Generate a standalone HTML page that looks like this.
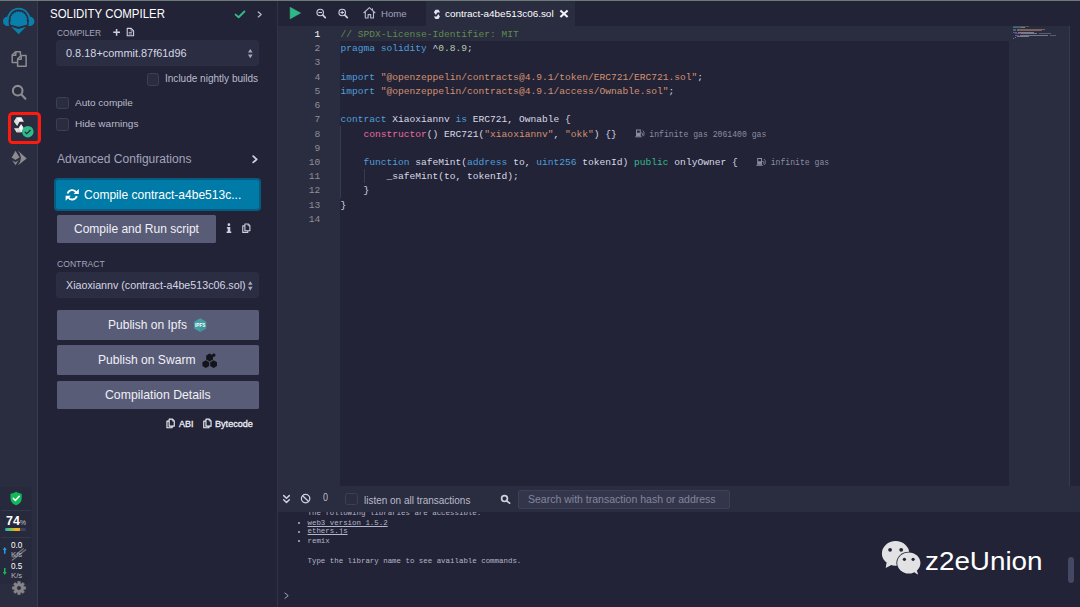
<!DOCTYPE html>
<html lang="en"><head><meta charset="utf-8"><title>Remix - Solidity Compiler</title>
<style>
html,body{margin:0;padding:0;background:#222336;}
#root{position:relative;width:1080px;height:607px;overflow:hidden;background:#222336;font-family:"Liberation Sans", sans-serif;}
#root *{box-sizing:border-box;}
.b{position:absolute;}
.t{position:absolute;white-space:pre;line-height:1;display:inline-block;transform-origin:0 50%;}
.num{position:absolute;left:290px;width:30.3px;text-align:right;font-family:"Liberation Mono", monospace;font-size:9.6px;line-height:14.23px;height:14.23px;}
.cl{position:absolute;left:340.4px;white-space:pre;font-family:"Liberation Mono", monospace;font-size:9.6px;line-height:14.23px;height:14.23px;color:#d8d9e6;}
.gas{position:absolute;white-space:pre;font-family:"Liberation Mono", monospace;font-size:8.15px;line-height:10px;color:#8a8ca2;}
.tm{position:absolute;white-space:pre;font-family:"Liberation Mono", monospace;font-size:7.43px;line-height:10px;height:10px;color:#b4b6c9;}
.btn{position:absolute;background:#595c76;border-radius:1.6px;}
.sel{position:absolute;background:#2b2d42;border:1px solid #2c2e44;border-radius:3px;}
.cb{position:absolute;background:#2a2c3f;border:1px solid #3d4055;border-radius:2.5px;}
svg{position:absolute;overflow:visible;}
</style></head>
<body><div id="root">
<div class="b" style="left:0px;top:0px;width:37.6px;height:607px;background:#2a2c3f;"></div>
<div class="b" style="left:37.3px;top:0px;width:1px;height:607px;background:#373a50;"></div>
<div class="b" style="left:277px;top:0px;width:1px;height:607px;background:#30334a;"></div>
<div class="b" style="left:426px;top:1px;width:149px;height:25px;background:#2a2c3f;"></div>
<div class="b" style="left:278px;top:26px;width:62.3px;height:460px;background:#2a2c3f;"></div>
<div class="b" style="left:340.3px;top:26px;width:670px;height:14.9px;background:#2a2c3f;"></div>
<div class="b" style="left:1009.1px;top:26px;width:60.4px;height:460px;background:#2a2c3f;"></div>
<div class="b" style="left:1069.3px;top:26px;width:1px;height:460px;background:#363a50;"></div>
<div class="b" style="left:278px;top:486px;width:802px;height:26.4px;background:#2a2c3f;"></div>
<div class="b" style="left:518px;top:490px;width:212px;height:18.7px;background:#33364b;border:1px solid #3c3f55;border-radius:2px;"></div>
<div class="b" style="left:1068px;top:557px;width:6.3px;height:26.3px;background:#444861;border-radius:3px;"></div>
<div class="b" style="left:0px;top:487px;width:32px;height:96.6px;background:#272a3c;border-radius:0 6px 6px 0;"></div>
<div class="b" style="left:1px;top:510.3px;width:29.5px;height:0.8px;background:#33374b;"></div>
<div class="b" style="left:1px;top:537.1px;width:29.5px;height:0.8px;background:#33374b;"></div>
<div class="b" style="left:4.8px;top:528px;width:21.2px;height:2.9px;background:#3f4256;border-radius:1.5px;"></div>
<div class="b" style="left:4.8px;top:528px;width:15.4px;height:2.9px;background:linear-gradient(90deg,#1fb6c4,#8bc34a 45%,#f4b223 75%,#f7a51c);border-radius:1.5px 0 0 1.5px;"></div>
<div class="b" style="left:340.4px;top:126.41px;width:0.8px;height:71.15px;background:#383b50;"></div>
<div class="b" style="left:363.5px;top:169.10000000000002px;width:0.8px;height:14.23px;background:#383b50;"></div>
<div class="b" style="left:1013.2px;top:26.32px;width:15.5px;height:1.0px;background:#608b4e;opacity:0.5;"></div>
<div class="b" style="left:1013.2px;top:27.29px;width:7.5px;height:1.0px;background:#4f9edb;opacity:0.5;"></div>
<div class="b" style="left:1021.2px;top:27.29px;width:3.5px;height:1.0px;background:#c8c9d8;opacity:0.5;"></div>
<div class="b" style="left:1013.2px;top:29.23px;width:3.0px;height:1.0px;background:#4f9edb;opacity:0.5;"></div>
<div class="b" style="left:1016.7px;top:29.23px;width:28.0px;height:1.0px;background:#d39273;opacity:0.5;"></div>
<div class="b" style="left:1013.2px;top:30.2px;width:3.0px;height:1.0px;background:#4f9edb;opacity:0.5;"></div>
<div class="b" style="left:1016.7px;top:30.2px;width:25.5px;height:1.0px;background:#d39273;opacity:0.5;"></div>
<div class="b" style="left:1013.2px;top:32.14px;width:4.0px;height:1.0px;background:#4f9edb;opacity:0.5;"></div>
<div class="b" style="left:1017.7px;top:32.14px;width:16.0px;height:1.0px;background:#c8c9d8;opacity:0.5;"></div>
<div class="b" style="left:1015.2px;top:33.11px;width:5.5px;height:1.0px;background:#e8549a;opacity:0.5;"></div>
<div class="b" style="left:1020.7px;top:33.11px;width:16.5px;height:1.0px;background:#c8c9d8;opacity:0.5;"></div>
<div class="b" style="left:1039.2px;top:33.11px;width:12.0px;height:1.0px;background:#8a8ca2;opacity:0.5;"></div>
<div class="b" style="left:1015.2px;top:35.05px;width:4.0px;height:1.0px;background:#4f9edb;opacity:0.5;"></div>
<div class="b" style="left:1019.7px;top:35.05px;width:28.0px;height:1.0px;background:#b7c4dc;opacity:0.5;"></div>
<div class="b" style="left:1049.7px;top:35.05px;width:6.0px;height:1.0px;background:#8a8ca2;opacity:0.5;"></div>
<div class="b" style="left:1017.2px;top:36.02px;width:11.5px;height:1.0px;background:#c8c9d8;opacity:0.5;"></div>
<div class="b" style="left:1015.2px;top:36.99px;width:0.5px;height:1.0px;background:#c8c9d8;opacity:0.5;"></div>
<div class="b" style="left:1013.2px;top:37.96px;width:0.5px;height:1.0px;background:#c8c9d8;opacity:0.5;"></div>
<div class="b" style="left:0px;top:0px;width:1080px;height:1px;background:#6d7b78;"></div>
<div class="sel" style="left:56.4px;top:40px;width:202.4px;height:26.2px"></div>
<div class="sel" style="left:56.4px;top:271.8px;width:202.4px;height:26.6px"></div>
<div class="cb" style="left:147px;top:73.2px;width:12.4px;height:12.4px"></div>
<div class="cb" style="left:56.3px;top:97.1px;width:12.6px;height:12.4px"></div>
<div class="cb" style="left:56.3px;top:118.2px;width:12.6px;height:12.4px"></div>
<div class="cb" style="left:345px;top:493.3px;width:13px;height:11.8px"></div>
<div class="b" style="left:54px;top:178.2px;width:207px;height:32.8px;background:#085b80;border-radius:4px"></div>
<div class="b" style="left:55.8px;top:180px;width:203.4px;height:29.2px;background:#007aa6;border-radius:2.5px"></div>
<div class="btn" style="left:56.7px;top:214.5px;width:158.9px;height:28px"></div>
<div class="btn" style="left:56.7px;top:310.3px;width:202px;height:29.3px"></div>
<div class="btn" style="left:56.7px;top:345.2px;width:202px;height:29.8px"></div>
<div class="btn" style="left:56.7px;top:380.9px;width:202px;height:28.1px"></div>
<div class="b" style="left:8.4px;top:111.8px;width:33px;height:32.6px;border:3.6px solid #ff1a10;border-radius:4.5px"></div>
<div class="num" style="top:27.95px;color:#ffffff">1</div>
<div class="cl" style="top:27.95px"><span style="color:#608b4e">// SPDX-License-Identifier: MIT</span></div>
<div class="num" style="top:42.18px;color:#8f8f9a">2</div>
<div class="cl" style="top:42.18px"><span style="color:#4f9edb">pragma</span> <span style="color:#4f9edb">solidity</span> <span style="color:#d8d9e6">^</span><span style="color:#b5cea8">0.8.9</span><span style="color:#d8d9e6">;</span></div>
<div class="num" style="top:56.41px;color:#8f8f9a">3</div>
<div class="num" style="top:70.64px;color:#8f8f9a">4</div>
<div class="cl" style="top:70.64px"><span style="color:#4f9edb">import</span> <span style="color:#d39273">&quot;@openzeppelin/contracts@4.9.1/token/ERC721/ERC721.sol&quot;</span><span style="color:#d8d9e6">;</span></div>
<div class="num" style="top:84.87px;color:#8f8f9a">5</div>
<div class="cl" style="top:84.87px"><span style="color:#4f9edb">import</span> <span style="color:#d39273">&quot;@openzeppelin/contracts@4.9.1/access/Ownable.sol&quot;</span><span style="color:#d8d9e6">;</span></div>
<div class="num" style="top:99.10px;color:#8f8f9a">6</div>
<div class="num" style="top:113.33px;color:#8f8f9a">7</div>
<div class="cl" style="top:113.33px"><span style="color:#4f9edb">contract</span><span style="color:#d8d9e6"> Xiaoxiannv </span><span style="color:#4f9edb">is</span><span style="color:#d8d9e6"> ERC721, Ownable {</span></div>
<div class="num" style="top:127.56px;color:#8f8f9a">8</div>
<div class="cl" style="top:127.56px">    <span style="color:#ec6aa4">constructor</span><span style="color:#d8d9e6">() ERC721(</span><span style="color:#d39273">&quot;xiaoxiannv&quot;</span><span style="color:#d8d9e6">, </span><span style="color:#d39273">&quot;okk&quot;</span><span style="color:#d8d9e6">) {}</span></div>
<div class="num" style="top:141.79px;color:#8f8f9a">9</div>
<div class="num" style="top:156.02px;color:#8f8f9a">10</div>
<div class="cl" style="top:156.02px">    <span style="color:#4f9edb">function</span><span style="color:#d8d9e6"> safeMint(</span><span style="color:#4f9edb">address</span><span style="color:#d8d9e6"> to, </span><span style="color:#4f9edb">uint256</span><span style="color:#d8d9e6"> tokenId) </span><span style="color:#32ba89">public</span><span style="color:#d8d9e6"> onlyOwner {</span></div>
<div class="num" style="top:170.25px;color:#8f8f9a">11</div>
<div class="cl" style="top:170.25px">        <span style="color:#d8d9e6">_safeMint(to, tokenId);</span></div>
<div class="num" style="top:184.48px;color:#8f8f9a">12</div>
<div class="cl" style="top:184.48px">    <span style="color:#d8d9e6">}</span></div>
<div class="num" style="top:198.71px;color:#8f8f9a">13</div>
<div class="cl" style="top:198.71px"><span style="color:#d8d9e6">}</span></div>
<div class="num" style="top:212.94px;color:#8f8f9a">14</div>
<div class="gas" style="left:649.3px;top:129.8px">infinite gas 2061400 gas</div>
<div class="gas" style="left:770.7px;top:158.3px">infinite gas</div>
<div class="b" style="left:278px;top:512px;width:790px;height:95px;overflow:hidden">
<div class="tm" style="left:29.5px;top:-3.6px;">The following libraries are accessible:</div>
<div class="b" style="left:19.9px;top:9.6px;width:2.6px;height:2.6px;border-radius:50%;background:#b4b6c9"></div>
<div class="tm" style="left:29.5px;top:5.5px;text-decoration:underline;text-underline-offset:0.5px;text-decoration-thickness:0.6px;">web3 version 1.5.2</div>
<div class="b" style="left:19.9px;top:18.5px;width:2.6px;height:2.6px;border-radius:50%;background:#b4b6c9"></div>
<div class="tm" style="left:29.5px;top:14.4px;text-decoration:underline;text-underline-offset:0.5px;text-decoration-thickness:0.6px;">ethers.js</div>
<div class="b" style="left:19.9px;top:27.6px;width:2.6px;height:2.6px;border-radius:50%;background:#b4b6c9"></div>
<div class="tm" style="left:29.5px;top:23.5px;">remix</div>
<div class="tm" style="left:29.5px;top:44.2px;">Type the library name to see available commands.</div>
</div>
<svg width="1080" height="607" viewBox="0 0 1080 607" style="left:0;top:0"><g fill="#0a7fab" stroke="none"><path d="M6.7 20.5 A12 12.7 0 0 1 30.7 20.5 L28.9 20.5 A10.2 10.9 0 0 0 8.5 20.5 Z"/><path d="M8.6 16.9 C5 16.3 2.9 18.6 3 21.5 C3.1 24.4 5.4 26.6 9 26 L8.5 20.5 Z"/><path d="M28.8 16.9 C32.4 16.3 34.5 18.6 34.4 21.5 C34.3 24.4 32 26.6 28.4 26 L28.9 20.5 Z"/><path d="M10.95 19.80 L9.89 18.53 L11.26 17.62 L10.60 16.10 L12.18 15.61 L11.97 13.97 L13.62 13.94 L13.89 12.31 L15.48 12.75 L16.19 11.26 L17.60 12.13 L18.70 10.90 L19.80 12.13 L21.21 11.26 L21.92 12.75 L23.51 12.31 L23.78 13.94 L25.43 13.97 L25.22 15.61 L26.80 16.10 L26.14 17.62 L27.51 18.53 L26.45 19.80 C27.60 22.40 27.40 23.80 26.70 24.80 L18.70 26.70 L10.70 24.80 C10.00 23.80 9.80 22.40 10.95 19.80 Z"/><path d="M11.2 26.7 L18.7 28.9 L26.2 26.7 L18.6 34.2 Z"/></g>
<g fill="none" stroke="#8d8c90" stroke-width="1.5" stroke-linejoin="round"><path d="M17.3 62.4 L12.2 62.4 L12.2 55 L15.6 51.7 L20.4 51.7 L20.4 55.2"/><path d="M12.4 55.2 L15.8 55.2 L15.8 51.9"/><path d="M17.6 66.2 L26.1 66.2 L26.1 55.6 L21 55.6 L17.6 59 Z"/><path d="M17.8 59.2 L21.2 59.2 L21.2 55.8"/></g>
<g fill="none" stroke="#8d8c90" stroke-width="2.1" stroke-linecap="round"><circle cx="17.7" cy="90.7" r="4.8"/><path d="M21.4 94.6 L25.4 98.7"/></g>
<g stroke="none"><path d="M14 121.5 L16.5 117.5 L21.6 117.5 L23.9 121.7 L19.4 121.8 L17.2 125.8 Z" fill="#ececec"/><path d="M16.5 117.5 L19 121.7 L21.6 117.5 Z" fill="#fafafa"/><path d="M14 121.5 L16.5 117.5 L19 121.7 L17.2 125.8 Z" fill="#dcdcdc"/><path d="M23.7 128.2 L21.4 132.3 L16.5 132.3 L14 128.3 L18.5 128.2 L21.1 124.3 Z" fill="#e4e4e4"/><path d="M21.4 132.3 L18.9 128.2 L16.5 132.3 Z" fill="#cfcfcf"/><path d="M23.7 128.2 L21.4 132.3 L18.9 128.2 L21.1 124.3 Z" fill="#f4f4f4"/></g>
<circle cx="27.8" cy="131.7" r="5.8" fill="#30b989"/><path d="M24.8 131.9 L26.7 133.7 L30.6 130" fill="none" stroke="#262a3c" stroke-width="1.25" stroke-linecap="butt" stroke-linejoin="miter"/>
<g fill="#8c8c8e" stroke="none"><path d="M17.8 150.6 L26.7 158.4 L17.8 165.5 Q24 158 17.8 150.6 Z"/><path d="M15.5 150.2 L11.3 157.7 L15.5 160.3 L20 157.5 Z" stroke="#2a2c3f" stroke-width="0.7"/><path d="M11.7 159.9 L15.5 161.9 L19.3 159.7 L15.5 165.6 Z" stroke="#2a2c3f" stroke-width="0.5"/></g>
<path d="M235.6 14.6 L238.6 17.2 L244.4 11.5" fill="none" stroke="#32ba89" stroke-width="1.9" stroke-linecap="round" stroke-linejoin="round"/>
<path d="M258.3 11.9 L261.2 14.4 L258.3 16.9" fill="none" stroke="#b4b6ca" stroke-width="1.3" stroke-linecap="round" stroke-linejoin="round"/>
<path d="M113.2 32.3 H120 M116.6 28.9 V35.7" fill="none" stroke="#cfd0df" stroke-width="1.5"/>
<g fill="none" stroke="#cfd0df" stroke-width="1.1" stroke-linejoin="round"><path d="M127.2 28.4 H131.2 L133.6 30.8 V35.7 H127.2 Z"/><path d="M131 28.6 V31 H133.4" stroke-width="0.7"/><path d="M128.7 32.4 H132.1 M128.7 34 H132.1" stroke-width="0.8"/></g>
<path d="M248 52.6 L250.3 49 L252.6 52.6 Z M248 54.6 L250.3 58.2 L252.6 54.6 Z" fill="#a7a9bf"/>
<path d="M248 284.8 L250.3 281.2 L252.6 284.8 Z M248 286.8 L250.3 290.4 L252.6 286.8 Z" fill="#a7a9bf"/>
<path d="M253.2 156.2 L256.7 159.3 L253.2 162.4" fill="none" stroke="#cfd0df" stroke-width="1.8" stroke-linecap="round" stroke-linejoin="round"/>
<g fill="none" stroke="#ffffff" stroke-width="1.9"><path d="M67.66 193.58 A4.7 4.7 0 0 1 76.27 192.45"/><path d="M76.74 196.02 A4.7 4.7 0 0 1 68.13 197.15"/></g><path d="M78.80 188.90 V193.90 H73.50 Z" fill="#ffffff"/><path d="M65.60 200.70 V195.70 H70.90 Z" fill="#ffffff"/>
<g fill="#cfd0df"><circle cx="228.9" cy="224.7" r="1.35"/><path d="M226.9 227 H230.3 V231.5 H231.3 V232.9 H226.6 V231.5 H227.7 V228.4 H226.9 Z"/></g>
<g fill="none" stroke="#cfd0df" stroke-width="1.10" stroke-linejoin="round"><path d="M244.80 225.90 L242.75 225.90 L242.75 232.40 L247.80 232.40 L247.80 231.00"/><path d="M244.90 223.95 L248.20 223.95 L249.90 225.60 L249.90 230.80 L244.90 230.80 Z"/><path d="M248.00 224.10 L248.00 225.80 L249.70 225.80" stroke-width="0.70"/></g>
<g fill="none" stroke="#eeeff7" stroke-width="1.12" stroke-linejoin="round"><path d="M169.05 421.15 L166.96 421.15 L166.96 427.78 L172.11 427.78 L172.11 426.35"/><path d="M169.15 419.16 L172.52 419.16 L174.25 420.84 L174.25 426.15 L169.15 426.15 Z"/><path d="M172.32 419.31 L172.32 421.05 L174.05 421.05" stroke-width="0.71"/></g>
<g fill="none" stroke="#eeeff7" stroke-width="1.12" stroke-linejoin="round"><path d="M205.85 421.15 L203.76 421.15 L203.76 427.78 L208.91 427.78 L208.91 426.35"/><path d="M205.95 419.16 L209.32 419.16 L211.05 420.84 L211.05 426.15 L205.95 426.15 Z"/><path d="M209.12 419.31 L209.12 421.05 L210.85 421.05" stroke-width="0.71"/></g>
<polygon points="200.2,318.2 206.2,321.7 206.2,328.6 200.2,332.0 194.2,328.6 194.2,321.7" fill="#469ea2"/>
<path d="M200.2 325.1 L200.2 332.0 L206.2 328.6 L206.2 321.7 Z" fill="#3b8d91" opacity="0.55"/>
<text x="200.2" y="326.70000000000005" text-anchor="middle" font-family="Liberation Sans, sans-serif" font-weight="700" font-size="5" textLength="10.4" lengthAdjust="spacingAndGlyphs" fill="#f4ffff">IPFS</text>
<polygon points="209.6,353.6 213.0,355.6 213.0,359.4 209.6,361.4 206.2,359.4 206.2,355.6" fill="#14141c"/><polygon points="205.8,360.3 209.2,362.2 209.2,366.1 205.8,368.1 202.4,366.1 202.4,362.2" fill="#14141c"/><polygon points="213.6,360.3 217.0,362.2 217.0,366.1 213.6,368.1 210.2,366.1 210.2,362.2" fill="#14141c"/><polygon points="213.8,353.2 215.4,354.2 215.4,356.1 213.8,357.0 212.2,356.1 212.2,354.2" fill="#14141c"/>
<path d="M290.1 7.2 L300.7 13 L290.1 18.9 Z" fill="#2fb886" stroke="#2fb886" stroke-width="0.5" stroke-linejoin="round"/>
<g fill="none" stroke="#cfd0df"><circle cx="320.2" cy="12.5" r="3.25" stroke-width="1.15"/><path d="M322.8 15.1 L325.3 17.6" stroke-width="1.7" stroke-linecap="round"/><path d="M318.4 12.5 H322.0" stroke-width="1.1"/></g>
<g fill="none" stroke="#cfd0df"><circle cx="342.2" cy="12.5" r="3.25" stroke-width="1.15"/><path d="M344.8 15.1 L347.3 17.6" stroke-width="1.7" stroke-linecap="round"/><path d="M340.4 12.5 H344.0 M342.2 10.7 V14.3" stroke-width="1.1"/></g>
<g fill="none" stroke="#b9bacd" stroke-width="1.1" stroke-linejoin="round"><path d="M363.6 13 L369.4 7.7 L375.2 13"/><path d="M365.3 12 V18 H368.1 V14.6 H370.7 V18 H373.5 V12"/><path d="M372.5 8.4 V10.3"/></g>
<g fill="#e2e3f0" transform="translate(433.9 9.8) scale(0.62) translate(-14 -117.5)"><path d="M14 121.5 L16.5 117.5 L21.6 117.5 L23.9 121.7 L19.4 121.8 L17.2 125.8 Z"/><path d="M23.7 128.2 L21.4 132.3 L16.5 132.3 L14 128.3 L18.5 128.2 L21.1 124.3 Z"/></g>
<path d="M560.4 10.4 L567.6 17 M567.6 10.4 L560.4 17" stroke="#f2f2f8" stroke-width="2.1" fill="none" stroke-linecap="butt"/>
<path d="M283.7 495.6 L286.5 498.3 L289.3 495.6 M283.7 499.8 L286.5 502.5 L289.3 499.8" fill="none" stroke="#cfd0df" stroke-width="1.5" stroke-linecap="round" stroke-linejoin="round"/>
<g fill="none" stroke="#cfd0df" stroke-width="1.3"><circle cx="305.6" cy="498.6" r="4.2"/><path d="M302.6 495.7 L308.6 501.5"/></g>
<g fill="none" stroke="#cfd0df" stroke-width="1.7" stroke-linecap="round"><circle cx="504.5" cy="498.6" r="2.9"/><path d="M506.8 501 L509.6 503.2"/></g>
<path d="M284.6 592.8 L288.2 595.7 L284.6 598.6" fill="none" stroke="#b4b6c9" stroke-width="0.9"/>
<g fill="#8a8ca2" stroke="none"><path d="M636.0 129.5 H640.8000000000001 V136.3 H636.0 Z M637.0 130.5 V132.70000000000002 H639.8000000000001 V130.5 Z" fill-rule="evenodd"/><path d="M635.2 136.3 H641.6 V137.3 H635.2 Z"/></g><path d="M641.0 132.9 H642.0 Q642.6 132.9 642.6 133.60000000000002 V135.10000000000002 Q642.6 135.9 643.3000000000001 135.9 Q644.0 135.9 644.0 135.10000000000002 V131.9 L642.6 130.5" fill="none" stroke="#8a8ca2" stroke-width="0.8"/>
<g fill="#8a8ca2" stroke="none"><path d="M757.1999999999999 158.0 H762.0 V164.8 H757.1999999999999 Z M758.1999999999999 159.0 V161.20000000000002 H761.0 V159.0 Z" fill-rule="evenodd"/><path d="M756.4 164.8 H762.8 V165.8 H756.4 Z"/></g><path d="M762.1999999999999 161.4 H763.1999999999999 Q763.8 161.4 763.8 162.10000000000002 V163.60000000000002 Q763.8 164.4 764.5 164.4 Q765.1999999999999 164.4 765.1999999999999 163.60000000000002 V160.4 L763.8 159.0" fill="none" stroke="#8a8ca2" stroke-width="0.8"/>
<g fill="#e2e2e4"><path d="M886.6 562.6 L885.7 568 L892.2 564.6 Z"/><ellipse cx="895.6" cy="553.4" rx="13.7" ry="12.3"/><path d="M913.2 571.6 L917.9 574.5 L916.8 570.2 Z" stroke="#222336" stroke-width="0.3"/><ellipse cx="908.8" cy="563" rx="12.4" ry="11.3" fill="#222336"/><ellipse cx="908.8" cy="563" rx="11.6" ry="10.6"/><path d="M913.2 571.6 L917.9 574.5 L916.6 570 Z"/></g><g fill="#222336"><circle cx="890.1" cy="549.8" r="1.9"/><circle cx="901.2" cy="549.8" r="1.9"/><circle cx="904.4" cy="559.3" r="1.6"/><circle cx="913.1" cy="559.3" r="1.6"/></g>
<path d="M16.1 491.8 C14.4 493 12.4 493.6 10.5 493.7 V498.4 C10.5 501.6 12.8 504 16.1 505.3 C19.4 504 21.7 501.6 21.7 498.4 V493.7 C19.8 493.6 17.8 493 16.1 491.8 Z" fill="#10b95a"/><path d="M13.3 498.4 L15.4 500.5 L19.2 496.3" fill="none" stroke="#fff" stroke-width="1.5" stroke-linecap="round" stroke-linejoin="round"/>
<path d="M4.75 546.9 L6.7 549.9 H5.5 V553.8 H4.0 V549.9 H2.8 Z" fill="#1e9fe8"/>
<path d="M4.75 575 L6.7 572 H5.5 V568.1 H4.0 V572 H2.8 Z" fill="#10b95a"/>
<path d="M11.8 560.6 L26 549.6 M12.6 557.4 L23.6 548.6" stroke="#74757d" stroke-width="1.3" fill="none"/>
<path d="M25.58 586.74 L25.58 589.26 L23.82 589.16 L23.23 590.59 L24.54 591.77 L22.77 593.54 L21.59 592.23 L20.16 592.82 L20.26 594.58 L17.74 594.58 L17.84 592.82 L16.41 592.23 L15.23 593.54 L13.46 591.77 L14.77 590.59 L14.18 589.16 L12.42 589.26 L12.42 586.74 L14.18 586.84 L14.77 585.41 L13.46 584.23 L15.23 582.46 L16.41 583.77 L17.84 583.18 L17.74 581.42 L20.26 581.42 L20.16 583.18 L21.59 583.77 L22.77 582.46 L24.54 584.23 L23.23 585.41 L23.82 586.84 Z M21.28 588.00 A2.28 2.28 0 1 0 16.72 588.00 A2.28 2.28 0 1 0 21.28 588.00 Z" fill="#858589" fill-rule="evenodd" stroke="#858589" stroke-width="0.6" stroke-linejoin="round"/></svg>
<span class="t" id="t0" style="left:50.20px;top:7.79px;font-size:12.3px;color:#ffffff;font-weight:400;font-family:'Liberation Sans', sans-serif;transform:scaleX(0.9308);">SOLIDITY COMPILER</span>
<span class="t" id="t1" style="left:57.00px;top:27.62px;font-size:9.9px;color:#a2a3bd;font-weight:400;font-family:'Liberation Sans', sans-serif;transform:scaleX(0.8547);">COMPILER</span>
<span class="t" id="t2" style="left:66.00px;top:47.83px;font-size:10.6px;color:#d5d6e4;font-weight:400;font-family:'Liberation Sans', sans-serif;transform:scaleX(1.0316);">0.8.18+commit.87f61d96</span>
<span class="t" id="t3" style="left:165.00px;top:74.33px;font-size:10px;color:#babbcc;font-weight:400;font-family:'Liberation Sans', sans-serif;transform:scaleX(1.0028);">Include nightly builds</span>
<span class="t" id="t4" style="left:74.70px;top:98.42px;font-size:9.9px;color:#babbcc;font-weight:400;font-family:'Liberation Sans', sans-serif;transform:scaleX(1.0124);">Auto compile</span>
<span class="t" id="t5" style="left:74.70px;top:119.32px;font-size:9.9px;color:#babbcc;font-weight:400;font-family:'Liberation Sans', sans-serif;transform:scaleX(1.0131);">Hide warnings</span>
<span class="t" id="t6" style="left:57.00px;top:152.54px;font-size:12px;color:#a2a3bd;font-weight:400;font-family:'Liberation Sans', sans-serif;transform:scaleX(1.0024);">Advanced Configurations</span>
<span class="t" id="t7" style="left:84.20px;top:189.10px;font-size:12.4px;color:#ffffff;font-weight:400;font-family:'Liberation Sans', sans-serif;transform:scaleX(0.9714);">Compile contract-a4be513c...</span>
<span class="t" id="t8" style="left:73.60px;top:223.10px;font-size:12.4px;color:#f0f0f6;font-weight:400;font-family:'Liberation Sans', sans-serif;transform:scaleX(0.9699);">Compile and Run script</span>
<span class="t" id="t9" style="left:57.00px;top:259.42px;font-size:9.9px;color:#a2a3bd;font-weight:400;font-family:'Liberation Sans', sans-serif;transform:scaleX(0.8713);">CONTRACT</span>
<span class="t" id="t10" style="left:65.80px;top:279.93px;font-size:10.6px;color:#d5d6e4;font-weight:400;font-family:'Liberation Sans', sans-serif;transform:scaleX(1.0099);">Xiaoxiannv (contract-a4be513c06.sol)</span>
<span class="t" id="t11" style="left:107.60px;top:319.10px;font-size:12.4px;color:#f0f0f6;font-weight:400;font-family:'Liberation Sans', sans-serif;transform:scaleX(0.9710);">Publish on Ipfs</span>
<span class="t" id="t12" style="left:98.40px;top:353.50px;font-size:12.4px;color:#f0f0f6;font-weight:400;font-family:'Liberation Sans', sans-serif;transform:scaleX(0.9766);">Publish on Swarm</span>
<span class="t" id="t13" style="left:104.70px;top:389.30px;font-size:12.4px;color:#f0f0f6;font-weight:400;font-family:'Liberation Sans', sans-serif;transform:scaleX(0.9895);">Compilation Details</span>
<span class="t" id="t14" style="left:178.70px;top:419.51px;font-size:9.2px;color:#eeeff7;font-weight:400;font-family:'Liberation Sans', sans-serif;transform:scaleX(0.9784);-webkit-text-stroke:0.3px #eeeff7;">ABI</span>
<span class="t" id="t15" style="left:215.30px;top:419.51px;font-size:9.2px;color:#eeeff7;font-weight:400;font-family:'Liberation Sans', sans-serif;transform:scaleX(0.9890);-webkit-text-stroke:0.3px #eeeff7;">Bytecode</span>
<span class="t" id="t16" style="left:380.50px;top:9.19px;font-size:9.7px;color:#a2a3bd;font-weight:400;font-family:'Liberation Sans', sans-serif;transform:scaleX(0.9905);">Home</span>
<span class="t" id="t17" style="left:445.30px;top:9.11px;font-size:9.5px;color:#ffffff;font-weight:400;font-family:'Liberation Sans', sans-serif;transform:scaleX(1.0437);">contract-a4be513c06.sol</span>
<span class="t" id="t18" style="left:322.50px;top:493.48px;font-size:10.3px;color:#babbcc;font-weight:400;font-family:'Liberation Sans', sans-serif;transform:scaleX(0.8725);">0</span>
<span class="t" id="t19" style="left:363.70px;top:495.57px;font-size:10.2px;color:#babbcc;font-weight:400;font-family:'Liberation Sans', sans-serif;transform:scaleX(0.9785);">listen on all transactions</span>
<span class="t" id="t20" style="left:527.50px;top:495.37px;font-size:10.2px;color:#83859c;font-weight:400;font-family:'Liberation Sans', sans-serif;transform:scaleX(1.0320);">Search with transaction hash or address</span>
<span class="t" id="t21" style="left:925.40px;top:548.63px;font-size:25.6px;color:#ffffff;font-weight:400;font-family:'Liberation Sans', sans-serif;transform:scaleX(1.0871);">z2eUnion</span>
<span class="t" id="t22" style="left:5.60px;top:514.83px;font-size:12.6px;color:#ffffff;font-weight:700;font-family:'Liberation Sans', sans-serif;transform:scaleX(0.9865);">74</span>
<span class="t" id="t23" style="left:20.10px;top:519.34px;font-size:7.4px;color:#c4c4cc;font-weight:400;font-family:'Liberation Sans', sans-serif;transform:scaleX(0.9082);">%</span>
<span class="t" id="t24" style="left:11.00px;top:540.64px;font-size:8.7px;color:#ffffff;font-weight:400;font-family:'Liberation Sans', sans-serif;transform:scaleX(0.9345);">0.0</span>
<span class="t" id="t25" style="left:11.00px;top:551.40px;font-size:7.8px;color:#b4b4bc;font-weight:400;font-family:'Liberation Sans', sans-serif;transform:scaleX(1.0011);">K/s</span>
<span class="t" id="t26" style="left:11.00px;top:562.04px;font-size:8.7px;color:#ffffff;font-weight:400;font-family:'Liberation Sans', sans-serif;transform:scaleX(0.9345);">0.5</span>
<span class="t" id="t27" style="left:11.00px;top:572.30px;font-size:7.8px;color:#b4b4bc;font-weight:400;font-family:'Liberation Sans', sans-serif;transform:scaleX(1.0011);">K/s</span>
</div></body></html>
